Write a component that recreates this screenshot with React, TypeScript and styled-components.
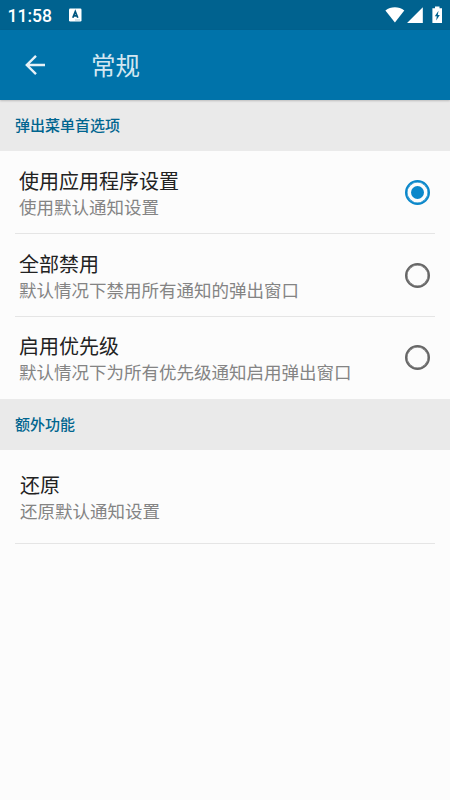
import React, { useState } from "react";
import styled, { createGlobalStyle } from "styled-components";

const GlobalStyle = createGlobalStyle`
  * { box-sizing: border-box; }
  body {
    margin: 0;
    background: #fcfcfc;
    font-family: Roboto, "Noto Sans CJK SC", sans-serif;
  }
`;

const Screen = styled.div`
  width: 450px;
  height: 800px;
  overflow: hidden;
  background: #fcfcfc;
  display: flex;
  flex-direction: column;
`;

const StatusBar = styled.div`
  height: 30px;
  flex: none;
  display: flex;
  align-items: center;
  background: #00628f;
  color: #fff;
  padding: 0 7px 0 7.5px;
`;

const Clock = styled.span`
  width: 61.5px;
  font-size: 17.5px;
  line-height: 30px;
  font-weight: 500;
  padding-top: 1px;
`;

const StatusIcons = styled.div`
  margin-left: auto;
  display: flex;
  align-items: center;
`;

const AppBar = styled.header`
  height: 70px;
  flex: none;
  display: flex;
  align-items: center;
  background: #0073aa;
  color: #e6f1f7;
  padding-left: 24px;
  box-shadow: 0 1px 2px rgba(0, 0, 0, 0.2);
  z-index: 1;
`;

const BackButton = styled.button`
  border: 0;
  padding: 0;
  background: none;
  color: inherit;
  width: 67px;
  height: 24px;
  display: flex;
`;

const PageTitle = styled.h1`
  margin: 0;
  padding-top: 3px;
  font-size: 24.5px;
  line-height: 36px;
  font-weight: 400;
  color: #d3e7f1;
`;

const SectionHeader = styled.h2`
  margin: 0;
  height: 51px;
  flex: none;
  padding: 1px 0 0 15px;
  background: #eaeaea;
  color: #00658f;
  font-size: 15px;
  line-height: 51px;
  font-weight: 500;
`;

const Row = styled.div<{ $height: number; $top: number; $divider?: boolean; $inset?: number }>`
  height: ${(p) => p.$height}px;
  flex: none;
  margin: 0 15px;
  padding: ${(p) => p.$top}px 5px 0 ${(p) => p.$inset ?? 4}px;
  display: flex;
  justify-content: space-between;
  border-bottom: ${(p) => (p.$divider ? "1px solid #e5e5e5" : "0")};
`;

const Label = styled.div`
  color: #222;
  font-size: 20px;
  line-height: 28px;
`;

const Summary = styled.div`
  color: #848484;
  font-size: 17.5px;
  line-height: 25px;
`;

const Radio = styled.button<{ $on: boolean }>`
  width: 25px;
  height: 25px;
  margin-top: 12px;
  padding: 0;
  flex: none;
  border-radius: 50%;
  border: 2px solid ${(p) => (p.$on ? "#0a87ca" : "#666")};
  box-shadow: inset 0 0 0 0.5px ${(p) => (p.$on ? "#0a87ca" : "#666")};
  background: transparent;
  display: grid;
  place-items: center;
`;

const Dot = styled.span`
  width: 13px;
  height: 13px;
  border-radius: 50%;
  background: #0a87ca;
`;

const options = [
  { label: "使用应用程序设置", summary: "使用默认通知设置", height: 83, top: 17 },
  { label: "全部禁用", summary: "默认情况下禁用所有通知的弹出窗口", height: 83, top: 16.5 },
  { label: "启用优先级", summary: "默认情况下为所有优先级通知启用弹出窗口", height: 82, top: 16 },
];

export default function App() {
  const [selected, setSelected] = useState(0);
  return (
    <>
      <GlobalStyle />
      <Screen>
        <StatusBar>
          <Clock>11:58</Clock>
          <svg width="13" height="14" viewBox="0 0 13 14">
            <rect y="0.5" width="12.5" height="13" rx="1.2" fill="#fff" />
            <path d="M3.8 9.8 6.3 3.6 8.8 9.8M4.7 7.8h3.2" fill="none" stroke="#00557f" strokeWidth="1.7" />
            <path d="M6 12h5" stroke="#8fb8cc" strokeWidth="0.7" />
          </svg>
          <StatusIcons>
            <svg width="58" height="18" viewBox="0 0 58 18">
              <path d="M0.4 4.5C5.8 0.2 13.9 0.2 19.3 4.5L9.9 16.4Z" fill="#fff" />
              <path d="M37.8 1.2V16.9H22.1Z" fill="#fff" />
              <path d="M50 .6h4.5v1.6H57v14.7h-9.6V2.2H50Z" fill="#fff" />
              <path d="m53.5 4.8-3.7 5.5h2l-.6 4.2 3.6-5.6h-2Z" fill="#00628f" />
            </svg>
          </StatusIcons>
        </StatusBar>
        <AppBar>
          <BackButton aria-label="返回">
            <svg width="24" height="24" viewBox="0 0 24 24" fill="none" stroke="currentColor" strokeWidth="2.4">
              <path d="M21 12H3M12 2.8 2.8 12l9.2 9.2" />
            </svg>
          </BackButton>
          <PageTitle>常规</PageTitle>
        </AppBar>
        <SectionHeader>弹出菜单首选项</SectionHeader>
        {options.map((o, i) => (
          <Row key={o.label} $height={o.height} $top={o.top} $divider={i < 2}>
            <div>
              <Label>{o.label}</Label>
              <Summary>{o.summary}</Summary>
            </div>
            <Radio $on={selected === i} aria-label={o.label} onClick={() => setSelected(i)}>
              {selected === i && <Dot />}
            </Radio>
          </Row>
        ))}
        <SectionHeader>额外功能</SectionHeader>
        <Row $height={94} $top={22} $inset={5} $divider>
          <div>
            <Label>还原</Label>
            <Summary>还原默认通知设置</Summary>
          </div>
        </Row>
      </Screen>
    </>
  );
}
